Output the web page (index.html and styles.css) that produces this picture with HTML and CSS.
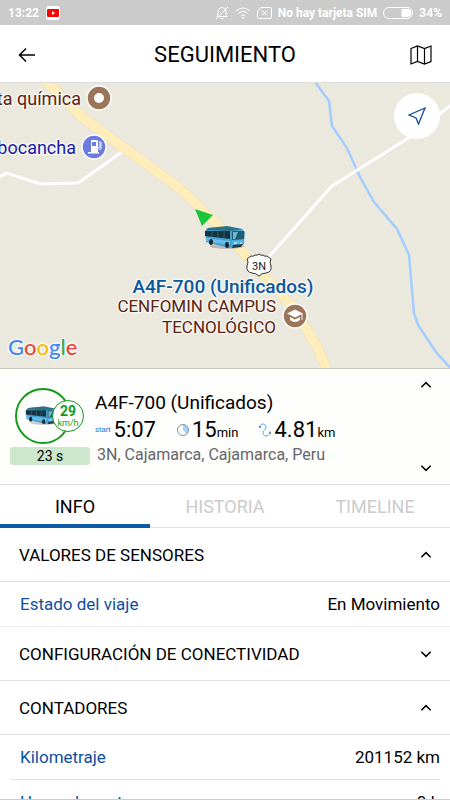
FILE: index.html
```html
<!DOCTYPE html>
<html lang="es">
<head>
    <meta charset="UTF-8">
    <meta name="viewport" content="width=device-width, initial-scale=1.0">
    <title>Seguimiento</title>
    <link rel="stylesheet" href="styles.css">
</head>
<body>
    <svg class="sprites" aria-hidden="true">
        <symbol id="bus" viewBox="0 0 42 24">
            <ellipse cx="23" cy="20" rx="17" ry="3" fill="#000" opacity=".2"/>
            <path d="M1 5 4 2 23 1 38 3 41 6 40 18 35 21 25 22 2 16Z" fill="#45a3d4"/>
            <path d="M4 2 23 0 38 3 27 5 2 4Z" fill="#2d7188"/>
            <path d="M1 5 26 5 26 13 1 10Z" fill="#16343f"/>
            <path d="M28 5 40 5 40 13 28 14Z" fill="#245b70"/>
            <path d="M29 6 34 6 31 13 29 13Z" fill="#70b9cf"/>
            <path d="M8 5v6M14 5v6M20 5v7" stroke="#2f5f6e" fill="none"/>
            <path d="M2 12 26 15 26 19 2 15Z" fill="#69bde8"/>
            <path d="M28 15 40 14 39 18 29 20Z" fill="#58b4e5"/>
            <path d="M29 19 39 18 37 21 28 22Z" fill="#203a48"/>
            <ellipse cx="7" cy="16" rx="2" ry="3" fill="#18282e"/>
            <ellipse cx="23" cy="19" rx="2" ry="3" fill="#18282e"/>
            <path d="M30 17h3M36 17h2" stroke="#e0f6ff"/>
        </symbol>
        <symbol id="up" viewBox="0 0 12 12"><path d="M2 8 6 4l4 4"/></symbol>
        <symbol id="down" viewBox="0 0 12 12"><path d="M2 4l4 4 4-4"/></symbol>
    </svg>

    <div class="app">
        <div class="status">
            <span>13:22</span>
            <svg class="youtube" width="14" height="14" viewBox="0 0 14 14">
                <rect width="14" height="14" rx="3" fill="#fff"/>
                <rect x="1" y="3" width="12" height="8" rx="1" fill="#f00"/>
                <path d="M6 5v4l3-2Z" fill="#fff"/>
            </svg>
            <div class="status-right">
                <svg class="line" width="14" height="14" viewBox="0 0 14 14">
                    <path d="M2 10.500h10L11 9V5.500a4 4 0 0 0-8 0V9ZM5.500 12.500h3M1 13 13 1"/>
                </svg>
                <svg class="line wifi" width="16" height="14" viewBox="0 0 16 14">
                    <path d="M1 5q7-6 14 0M3.500 7.500q4.500-4 9 0M6 10q2-2 4 0"/><circle cx="8" cy="12" r=".6"/>
                </svg>
                <svg class="line" width="15" height="14" viewBox="0 0 15 14">
                    <path d="M4 1.500h9.500q1 0 1 1v9q0 1-1 1h-12q-1 0-1-1V5ZM5 4.500l5 5M10 4.500l-5 5"/>
                </svg>
                <span class="sim">No hay tarjeta SIM</span>
                <svg class="line" width="30" height="12" viewBox="0 0 30 12">
                    <rect x=".5" y=".5" width="29" height="11" rx="5.500"/>
                    <path d="M19 2.500h5.500a3.500 3.500 0 0 1 0 7H19Z" fill="#fff"/>
                </svg>
                <span>34%</span>
            </div>
        </div>

        <header class="header">
            <button class="icon-btn" aria-label="Volver">
                <svg width="18" height="16" viewBox="0 0 18 16"><path d="M17 8H2M8 1.500 1.500 8 8 14.500"/></svg>
            </button>
            <h1>SEGUIMIENTO</h1>
            <button class="icon-btn map-btn" aria-label="Mapa">
                <svg width="22" height="20" viewBox="0 0 22 20"><path d="M1 3.500 7.500 1l7 2.500L21 1v15.500L14.500 19l-7-2.500L1 19ZM7.500 1v15.500M14.500 3.500V19"/></svg>
            </button>
        </header>

        <div class="map">
            <svg class="map-canvas" viewBox="0 0 450 287" preserveAspectRatio="xMidYMid slice">
                <path class="road-minor" d="M-5 97 7 91 40 102 78 101 122 70"/>
                <path class="river" d="M310-7 329 19 332 44 347 66 360 95 374 120 397 147 409 173 414 231 418 243 436 270 455 291"/>
                <path class="road-minor" d="M455 20 410 55 332 104 265 179"/>
                <path class="road-edge" d="M38-9 82 35 123 65 178 105 220 145 262 191 297 230 306 246 318 267 329 293"/>
                <path class="road" d="M38-9 82 35 123 65 178 105 220 145 262 191 297 230 306 246 318 267 329 293"/>

                <!-- lugares -->
                <text class="place brown" x="81" y="23" text-anchor="end">ta química</text>
                <circle class="pin" cx="99" cy="16" r="12" fill="#9c7459"/>
                <circle cx="99" cy="16" r="5" fill="#fff"/>
                <text class="place navy" x="76" y="72" text-anchor="end">bocancha</text>
                <circle class="pin" cx="94" cy="65" r="12" fill="#6b7be0"/>
                <path d="M88 71.500h11V70h-1V59q0-1-1-1h-5q-1 0-1 1v11h-3Z" fill="#fff"/>
                <path d="M92 60h4v4h-4Z" fill="#6b7be0"/>
                <path d="M98 66q2 0 2-3v-4M101 60v7q-1 1-2 0" fill="none" stroke="#fff"/>
                <text class="campus brown" x="276" y="230" text-anchor="end">CENFOMIN CAMPUS</text>
                <text class="campus brown" x="276" y="251" text-anchor="end">TECNOLÓGICO</text>
                <circle class="pin" cx="295" cy="234" r="12" fill="#9c7459"/>
                <path d="m287 231.500 8-4 8 4-8 4ZM290 235l5 2.500 5-2.500v3q-5 4-10 0Z" fill="#fff"/>
                <path d="M302 232v6" stroke="#fff"/>

                <!-- vehículo -->
                <path d="m195 127 18 6-11 11Z" fill="#19c63b"/>
                <use href="#bus" x="204" y="144" width="42" height="24"/>
                <path d="M251 174q2 1 4-1 2 1 4-1 2 2 4 1 2 2 4 1l4 3q-2 3 0 7 1 6-5 7-4 0-7 3-3-3-7-3-6-1-5-7 2-4 0-7Z" fill="#fff" stroke="#333"/>
                <text class="route" x="259" y="188" text-anchor="middle">3N</text>
                <text class="vehicle" x="223" y="211" text-anchor="middle">A4F-700 (Unificados)</text>
                <text class="google" x="8" y="273"><tspan fill="#4285f4">G</tspan><tspan fill="#ea4335">o</tspan><tspan fill="#fbbc05">o</tspan><tspan fill="#4285f4">g</tspan><tspan fill="#34a853">l</tspan><tspan fill="#ea4335">e</tspan></text>
            </svg>
            <button class="locate" aria-label="Mi ubicación">
                <svg width="18" height="18" viewBox="0 0 18 18"><path d="M17 1 1 8l7 3 2.500 6Z"/></svg>
            </button>
        </div>

        <section class="card">
            <div class="unit">
                <div class="ring">
                    <svg width="34" height="22"><use href="#bus"/></svg>
                    <div class="speed"><b>29</b><span>km/h</span></div>
                </div>
                <div class="age">23 s</div>
            </div>
            <div class="details">
                <h2>A4F-700 (Unificados)</h2>
                <div class="stats">
                    <div class="stat"><span class="start">start</span>5:07</div>
                    <div class="stat">
                        <svg width="12" height="12" viewBox="0 0 12 12">
                            <path d="M6 6V.5a5.500 5.500 0 0 1 3.500 9.700Z" fill="#a9d3ff"/>
                            <circle cx="6" cy="6" r="5.500" fill="none" stroke="#7f93a8"/>
                        </svg>
                        <span>15<small>min</small></span>
                    </div>
                    <div class="stat">
                        <svg width="12" height="14" viewBox="0 0 12 14">
                            <path d="M1 4C1 0 7 0 7 4c0 3-3 3-3 6 0 4 6 4 7 0" fill="none" stroke="#58a6f5"/>
                            <circle cx="1" cy="4" r="1" fill="#3776b8"/><circle cx="11" cy="9.500" r="1" fill="#3776b8"/>
                        </svg>
                        <span>4.81<small>km</small></span>
                    </div>
                </div>
                <p>3N, Cajamarca, Cajamarca, Peru</p>
            </div>
            <div class="arrows">
                <button aria-label="Anterior"><svg class="chevron"><use href="#up"/></svg></button>
                <button aria-label="Siguiente"><svg class="chevron"><use href="#down"/></svg></button>
            </div>
        </section>

        <nav class="tabs">
            <button class="tab active">INFO</button>
            <button class="tab">HISTORIA</button>
            <button class="tab">TIMELINE</button>
        </nav>

        <main class="list">
            <button class="group">VALORES DE SENSORES<svg class="chevron"><use href="#up"/></svg></button>
            <dl class="rows">
                <div class="row"><dt>Estado del viaje</dt><dd>En Movimiento</dd></div>
            </dl>
            <button class="group">CONFIGURACIÓN DE CONECTIVIDAD<svg class="chevron"><use href="#down"/></svg></button>
            <button class="group">CONTADORES<svg class="chevron"><use href="#up"/></svg></button>
            <dl class="rows">
                <div class="row"><dt>Kilometraje</dt><dd>201152 km</dd></div>
                <div class="row"><dt>Horas de motor</dt><dd>0 h</dd></div>
            </dl>
        </main>
    </div>
</body>
</html>
```

FILE: styles.css
```css
* {
    box-sizing: border-box;
}
body {
    margin: 0;
    font-family: Roboto, Arial, sans-serif;
    color: #000;
    background: #fff;
}
button {
    font: inherit;
    color: inherit;
    background: none;
    border: 0;
    padding: 0;
    cursor: pointer;
}
h1, h2, p, dl, dd {
    margin: 0;
    font-weight: 400;
}
svg {
    display: block;
    flex: none;
}
.sprites {
    position: absolute;
    width: 0;
    height: 0;
}
.app {
    height: 100vh;
    display: flex;
    flex-direction: column;
    overflow: hidden;
    border-bottom: 1px solid #ccc;
}

/* barra de estado */
.status {
    flex: none;
    height: 25px;
    padding: 0 8px;
    display: flex;
    align-items: center;
    gap: 7px;
    background: #cbcbcb;
    color: #fff;
    font-size: 12px;
    font-weight: 700;
}
.status-right {
    margin-left: auto;
    display: flex;
    align-items: center;
    gap: 6px;
}
.line {
    fill: none;
    stroke: #fff;
}

/* cabecera */
.header {
    flex: none;
    height: 58px;
    padding: 2px 18px 0;
    display: flex;
    align-items: center;
    justify-content: space-between;
    border-bottom: 1px solid #ddd;
}
.header h1 {
    font-size: 22px;
}
.icon-btn {
    width: 22px;
    height: 40px;
    display: flex;
    align-items: center;
    fill: none;
    stroke: #000;
    stroke-width: 1.5;
}
.map-btn {
    justify-content: flex-end;
    stroke-width: 1.2;
}

/* mapa */
.map {
    position: relative;
    flex: none;
    height: 286px;
    background: #ebe8de;
    border-bottom: 1px solid #ccc9c0;
}
.map-canvas {
    width: 100%;
    height: 100%;
}
.road-minor {
    fill: none;
    stroke: #fff;
    stroke-width: 3;
}
.river {
    fill: none;
    stroke: #a3ccff;
    stroke-width: 2.5;
}
.road-edge {
    fill: none;
    stroke: #f1dfa5;
    stroke-width: 10;
}
.road {
    fill: none;
    stroke: #ffeebb;
    stroke-width: 9;
}
.place, .campus, .vehicle, .google {
    paint-order: stroke;
    stroke: #f7f6f1;
    stroke-width: 3;
    stroke-linejoin: round;
}
.place {
    font-size: 18px;
}
.campus {
    font-size: 17px;
}
.brown {
    fill: #5d2413;
}
.navy {
    fill: #1a1aa6;
}
.pin {
    stroke: #fff;
    stroke-width: 1.5;
}
.route {
    font-size: 11px;
    fill: #222;
}
.vehicle {
    font-size: 19px;
    font-weight: 500;
    fill: #0b589f;
}
.google {
    font-family: Lato, sans-serif;
    font-size: 22px;
    font-weight: 500;
}
.locate {
    position: absolute;
    top: 10px;
    right: 10px;
    width: 46px;
    height: 46px;
    border-radius: 50%;
    background: #fff;
    display: flex;
    align-items: center;
    justify-content: center;
    fill: none;
    stroke: #10489a;
    stroke-width: 1.3;
}

/* ficha de la unidad */
.card {
    flex: none;
    display: flex;
    gap: 5px;
    padding: 9px 17px 9px 10px;
    background: #fefefc;
}
.unit {
    width: 80px;
    padding-top: 10px;
}
.ring {
    position: relative;
    width: 56px;
    height: 56px;
    margin-left: 5px;
    padding-left: 8px;
    display: flex;
    align-items: center;
    border: 2px solid #149b1b;
    border-radius: 50%;
}
.speed {
    position: absolute;
    top: 10px;
    left: 35px;
    width: 32px;
    height: 32px;
    display: flex;
    flex-direction: column;
    align-items: center;
    justify-content: center;
    background: #fff;
    border: 1px solid #149b1b;
    border-radius: 50%;
    color: #149b1b;
    font-size: 9px;
    line-height: 10px;
}
.speed b {
    font-size: 14px;
    line-height: 14px;
}
.age {
    margin-top: 3px;
    background: #cde7cd;
    border-radius: 3px;
    font-size: 14px;
    line-height: 18px;
    text-align: center;
}
.details {
    flex: 1;
    padding: 13px 0 10px;
}
.details h2 {
    font-size: 19px;
    line-height: 24px;
}
.stats {
    display: flex;
    gap: 21px;
    font-size: 22px;
    line-height: 30px;
}
.stat {
    display: flex;
    align-items: center;
    gap: 3px;
}
.stat small {
    font-size: 13px;
    line-height: 1;
}
.start {
    font-family: "Liberation Sans", Arial, sans-serif;
    font-size: 8px;
    color: #1877e0;
}
.details p {
    padding-left: 2px;
    font-size: 16px;
    line-height: 20px;
    color: #666;
}
.arrows {
    display: flex;
    flex-direction: column;
    justify-content: space-between;
}
.chevron {
    width: 14px;
    height: 14px;
    fill: none;
    stroke: #000;
    stroke-width: 1.3;
}

/* pestañas */
.tabs {
    flex: none;
    display: flex;
    height: 44px;
    border-top: 1px solid #e2e2e2;
    border-bottom: 1px solid #e2e2e2;
}
.tab {
    flex: 1;
    padding-top: 3px;
    margin-bottom: -1px;
    border-bottom: 4px solid transparent;
    font-size: 18px;
    color: #ccc;
}
.tab.active {
    color: #000;
    border-color: #0d5aa7;
}

/* listado */
.list {
    flex: 1;
    min-height: 0;
    overflow-y: auto;
    scrollbar-width: none;
}
.group {
    width: 100%;
    height: 54px;
    padding: 0 17px 0 19px;
    display: flex;
    align-items: center;
    justify-content: space-between;
    border-bottom: 1px solid #e2e2e2;
    font-size: 17px;
}
.rows {
    border-bottom: 1px solid #eee;
}
.row {
    height: 44px;
    margin: 0 10px;
    padding-left: 10px;
    display: flex;
    align-items: center;
    justify-content: space-between;
    font-size: 17px;
}
.row + .row {
    border-top: 1px solid #e2e2e2;
}
.row dt {
    color: #0d4fa3;
}
```
